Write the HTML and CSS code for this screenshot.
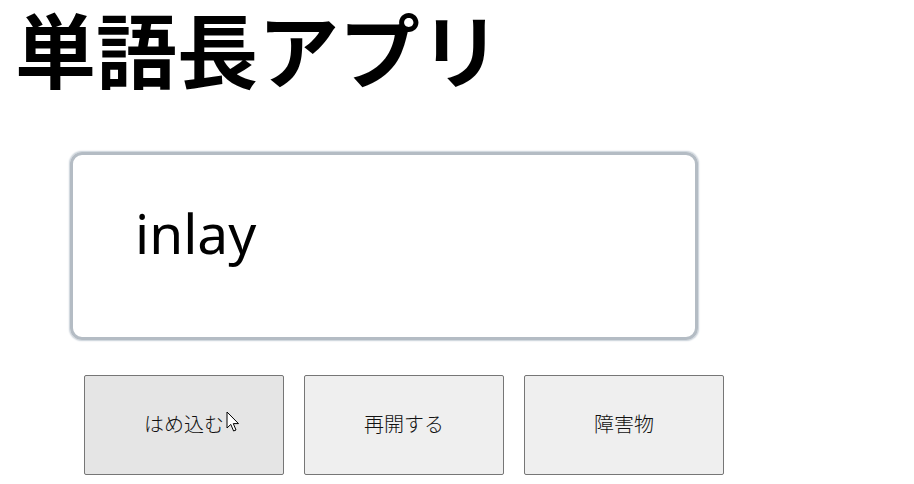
FILE: index.html
```html
<!DOCTYPE html>
<html lang="ja">
<head>
<meta charset="utf-8">
<link rel="stylesheet" href="styles.css">
</head>
<body>
<h1 class="title">単語長アプリ</h1>
<div class="card">
  <span class="word">inlay</span>
</div>
<div class="actions">
  <button class="btn btn-hover">はめ込む
    <svg class="cursor" width="14" height="22" viewBox="0 0 14 22"><path d="M1 1 L1 17 L4.8 13.4 L7.6 20 L10 19 L7.3 12.6 L12.5 12.6 Z" fill="#fff" stroke="#000" stroke-width="1" stroke-linejoin="round"/></svg>
  </button>
  <button class="btn">再開する</button>
  <button class="btn">障害物</button>
</div>
</body>
</html>
```
FILE: styles.css
```css
html, body {
  margin: 0;
  padding: 0;
  background: #fff;
}
body {
  font-family: "Noto Sans", "Noto Sans CJK JP", sans-serif;
  color: #000;
}
.title {
  margin: -12px 0 0;
  padding: 0 0 0 15px;
  font-family: "Noto Sans CJK JP", sans-serif;
  font-weight: 700;
  font-size: 81px;
  line-height: normal;
  letter-spacing: 0;
}
.card {
  margin: 47px 0 0 70px;
  width: 628px;
  height: 188px;
  border: 3px solid #b4bcc4;
  border-radius: 12px;
  box-shadow: 0 0 1.5px 0.5px #c8d0d8;
  display: flex;
  align-items: center;
  box-sizing: border-box;
  padding: 0 0 28px 62px;
}
.word {
  font-family: "Noto Sans", sans-serif;
  font-size: 55px;
  line-height: 1;
}
.actions {
  display: flex;
  gap: 20px;
  margin: 35px 0 0 84px;
}
.btn {
  position: relative;
  width: 200px;
  height: 100px;
  background: #efefef;
  border: 1px solid #767676;
  border-radius: 2px;
  font-family: "Noto Sans CJK JP", sans-serif;
  font-weight: 300;
  font-size: 20px;
  color: #111;
  padding: 0 0 4px;
}
.btn-hover {
  background: #e5e5e5;
}
.cursor {
  position: absolute;
  left: 141px;
  top: 35px;
}
```
